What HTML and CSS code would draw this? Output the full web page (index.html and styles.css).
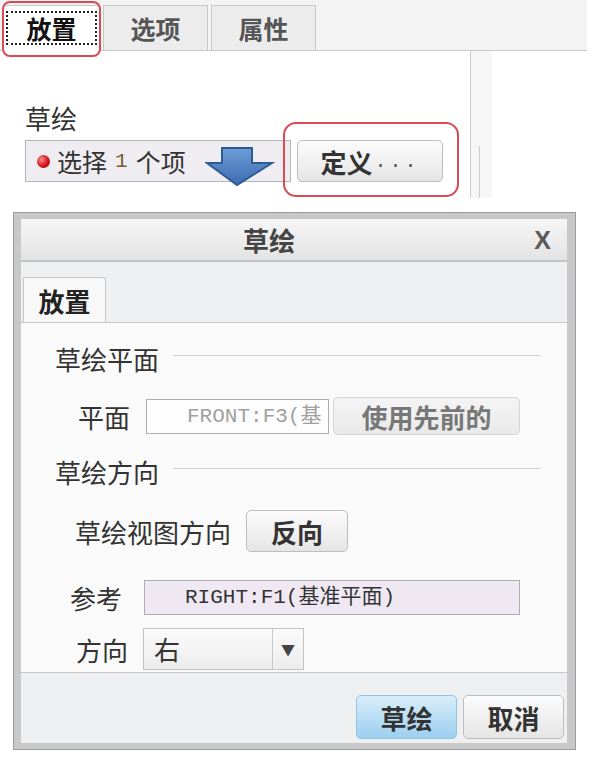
FILE: index.html
```html
<!DOCTYPE html>
<html lang="zh-CN">
<head>
    <meta charset="UTF-8">
    <meta name="viewport" content="width=device-width, initial-scale=1.0">
    <title>草绘</title>
    <link rel="stylesheet" href="styles.css">
</head>
<body>
<div class="top">
    <div class="tabbar">
        <div class="tab tab-active"><span class="focus">放置</span></div>
        <div class="tab">选项</div>
        <div class="tab">属性</div>
    </div>
    <div class="pane">
        <div class="pane-main">
            <div class="pane-label">草绘</div>
            <div class="collector-row">
                <div class="collector"><span class="dot"></span>选择 <span class="num">1</span> 个项</div>
                <button class="btn btn-define">定义<span class="dots">...</span></button>
            </div>
        </div>
        <div class="pane-side"><div class="side-edge"></div></div>
    </div>

    <!-- annotations drawn over the screenshot -->
    <div class="mark mark-tab"></div>
    <div class="mark mark-define"></div>
    <svg class="arrow" width="70" height="42" viewBox="0 0 70 42">
        <defs>
            <linearGradient id="arrowFill" x1="0" y1="0" x2="0" y2="1">
                <stop offset="0" stop-color="#6f9dd8"/>
                <stop offset="1" stop-color="#3c6cb0"/>
            </linearGradient>
        </defs>
        <polygon points="17,2 47,2 47,17 67,17 32,39 2,17 17,17" fill="url(#arrowFill)" stroke="#2f5b94" stroke-width="2"/>
    </svg>
</div>

<div class="dialog">
    <div class="dlg-title">
        <span class="dlg-name">草绘</span>
        <span class="dlg-close">X</span>
    </div>
    <div class="dlg-tabs">
        <div class="dlg-tab">放置</div>
    </div>
    <div class="dlg-body">
        <div class="group-head"><span>草绘平面</span><span class="rule"></span></div>
        <div class="row row-plane">
            <span class="lbl">平面</span>
            <div class="field field-plane"><span class="field-text">FRONT:F3(基</span></div>
            <button class="btn btn-prev">使用先前的</button>
        </div>
        <div class="group-head group-dir"><span>草绘方向</span><span class="rule"></span></div>
        <div class="row row-view">
            <span class="lbl">草绘视图方向</span>
            <button class="btn btn-flip">反向</button>
        </div>
        <div class="row row-ref">
            <span class="lbl">参考</span>
            <div class="field field-ref">RIGHT:F1(基准平面)</div>
        </div>
        <div class="row row-dir">
            <span class="lbl">方向</span>
            <div class="select">
                <span class="select-val">右</span>
                <span class="select-btn">▼</span>
            </div>
        </div>
    </div>
    <div class="dlg-foot">
        <button class="btn btn-ok">草绘</button>
        <button class="btn btn-cancel">取消</button>
    </div>
</div>
</body>
</html>
```

FILE: styles.css
```css
* {
    box-sizing: border-box;
}

body {
    margin: 0;
    width: 596px;
    height: 758px;
    overflow: hidden;
    background-color: #fff;
    font-family: "Noto Sans CJK SC", "Liberation Sans", sans-serif;
    color: #333;
}

button {
    font-family: inherit;
}

/* ---- upper part: feature tabs ---- */
.top {
    position: relative;
    height: 212px;
}

.tabbar {
    display: flex;
    align-items: flex-end;
    width: 587px;
    height: 51px;
    padding-left: 3px;
    background-color: #f3f3f3;
    border-bottom: 1px solid #c8c8c8;
}

.tab {
    display: flex;
    align-items: center;
    justify-content: center;
    width: 105px;
    height: 46px;
    margin-right: 3px;
    margin-bottom: -1px;
    background-color: #ececec;
    border: 1px solid #c8c8c8;
    font-size: 25px;
    font-weight: bold;
    color: #555;
}

.tab-active {
    width: 97px;
    background-color: #fff;
    border-bottom-color: #fff;
    color: #111;
}

.focus {
    display: flex;
    align-items: center;
    justify-content: center;
    width: 91px;
    height: 34px;
    border: 2px dotted #222;
}

.pane {
    display: flex;
    height: 147px;
}

.pane-main {
    width: 471px;
    padding: 52px 0 0 25px;
    border-right: 1px solid #ccc;
}

.pane-label {
    font-size: 26px;
    line-height: 30px;
    color: #333;
}

.collector-row {
    display: flex;
    gap: 6px;
    margin-top: 7px;
}

.collector {
    display: flex;
    align-items: center;
    width: 266px;
    height: 42px;
    padding-left: 11px;
    background-color: #efedf2;
    border: 1px solid #b5b5b5;
    font-size: 25px;
    white-space: nowrap;
}

.dot {
    width: 13px;
    height: 13px;
    margin-right: 7px;
    border-radius: 50%;
    background: radial-gradient(circle at 35% 35%, #ff8a8a, #d0121b 55%, #8a0008);
}

.num {
    margin: 0 8px;
    font-family: "Liberation Mono", monospace;
    font-size: 21px;
    color: #7a5b33;
}

.pane-side {
    width: 21px;
    padding: 95px 0 0 8px;
    background-color: #f6f6f6;
}

.side-edge {
    height: 100%;
    border-left: 1px solid #ccc;
}

.mark {
    position: absolute;
    border: 2px solid #d94a55;
}

.mark-tab {
    left: 2px;
    top: 1px;
    width: 99px;
    height: 56px;
    border-radius: 8px;
}

.mark-define {
    left: 283px;
    top: 122px;
    width: 176px;
    height: 75px;
    border-radius: 13px;
}

.arrow {
    position: absolute;
    left: 205px;
    top: 146px;
}

/* ---- buttons ---- */
.btn {
    display: flex;
    align-items: center;
    justify-content: center;
    padding: 0;
    background: linear-gradient(#fcfcfc, #e5e5e5);
    border: 1px solid #bdbdbd;
    border-radius: 5px;
    font-size: 26px;
    font-weight: bold;
    color: #333;
}

.btn-define {
    width: 146px;
    height: 42px;
}

.dots {
    margin-left: 2px;
    font-family: "Liberation Mono", monospace;
    font-weight: normal;
    font-size: 20px;
    letter-spacing: 3px;
    color: #555;
}

/* ---- dialog ---- */
.dialog {
    width: 563px;
    height: 538px;
    margin-left: 13px;
    padding: 6px 8px 6px 7px;
    background-color: #c8c8c8;
    border: 1px solid #9c9c9c;
    display: flex;
    flex-direction: column;
}

.dlg-title {
    position: relative;
    display: flex;
    align-items: center;
    justify-content: center;
    height: 43px;
    padding-right: 50px;
    background: linear-gradient(#f6f6f6, #e3e3e3);
    border-bottom: 2px solid #c3c3c3;
}

.dlg-name {
    font-size: 26px;
    font-weight: bold;
    color: #444;
}

.dlg-close {
    position: absolute;
    right: 16px;
    top: 7px;
    font-family: "Liberation Sans", sans-serif;
    font-size: 25px;
    font-weight: bold;
    color: #5a5a5a;
}

.dlg-tabs {
    display: flex;
    align-items: flex-end;
    height: 60px;
    padding-left: 2px;
    background-color: #eeeff1;
}

.dlg-tab {
    display: flex;
    align-items: center;
    justify-content: center;
    width: 83px;
    height: 46px;
    margin-bottom: -1px;
    background-color: #f8f8f8;
    border: 1px solid #c8c8c8;
    border-bottom: none;
    border-top-right-radius: 3px;
    font-size: 26px;
    font-weight: bold;
    color: #222;
}

.dlg-body {
    height: 351px;
    padding: 20px 27px 0 34px;
    background-color: #fafafa;
    border-top: 1px solid #c8c8c8;
    border-bottom: 1px solid #c8c8c8;
}

.group-head {
    display: flex;
    align-items: center;
    gap: 14px;
    height: 30px;
    font-size: 26px;
    color: #333;
}

.group-dir {
    margin-top: 22px;
}

.rule {
    flex: 1;
    border-top: 1px solid #cfcfcf;
    margin-top: -6px;
}

.row {
    display: flex;
    align-items: center;
    font-size: 26px;
}

.lbl {
    color: #333;
    white-space: nowrap;
}

.row-plane {
    height: 36px;
    margin-top: 25px;
    padding-left: 23px;
}

.row-plane .lbl {
    margin-right: 16px;
}

.field {
    height: 35px;
    padding-left: 40px;
    line-height: 33px;
    border: 1px solid #adadad;
    font-family: "Liberation Mono", "Noto Sans CJK SC", monospace;
    font-size: 21px;
    white-space: nowrap;
    overflow: hidden;
}

.field-plane {
    width: 183px;
    background-color: #fdfdfd;
    color: #a0a0a0;
}

.btn-prev {
    width: 187px;
    height: 38px;
    margin-left: 4px;
    color: #777;
    background: linear-gradient(#f4f4f4, #e9e9e9);
    border-color: #d4d4d4;
}

.row-view {
    height: 42px;
    margin-top: 24px;
    padding-left: 20px;
}

.row-view .lbl {
    margin-right: 15px;
}

.btn-flip {
    width: 102px;
    height: 42px;
}

.row-ref {
    height: 35px;
    margin-top: 28px;
    padding-left: 15px;
}

.row-ref .lbl {
    margin-right: 22px;
}

.field-ref {
    width: 376px;
    background-color: #efe8f3;
    color: #333;
}

.row-dir {
    height: 42px;
    margin-top: 13px;
    padding-left: 21px;
}

.row-dir .lbl {
    margin-right: 15px;
}

.select {
    display: flex;
    width: 161px;
    height: 42px;
    background: linear-gradient(#fbfbfb, #ececec);
    border: 1px solid #c2c2c2;
}

.select-val {
    flex: 1;
    padding-left: 10px;
    line-height: 40px;
}

.select-btn {
    width: 31px;
    display: flex;
    align-items: center;
    justify-content: center;
    border-left: 1px solid #c8c8c8;
    font-size: 14px;
    color: #444;
}

.dlg-foot {
    flex: 1;
    display: flex;
    justify-content: flex-end;
    align-items: flex-end;
    gap: 6px;
    padding: 0 3px 4px 0;
    background-color: #eeeff1;
}

.btn-ok,
.btn-cancel {
    width: 101px;
    height: 44px;
}

.btn-ok {
    background: linear-gradient(#d9eefb, #9ccff0);
    border-color: #93c4e4;
}
```
